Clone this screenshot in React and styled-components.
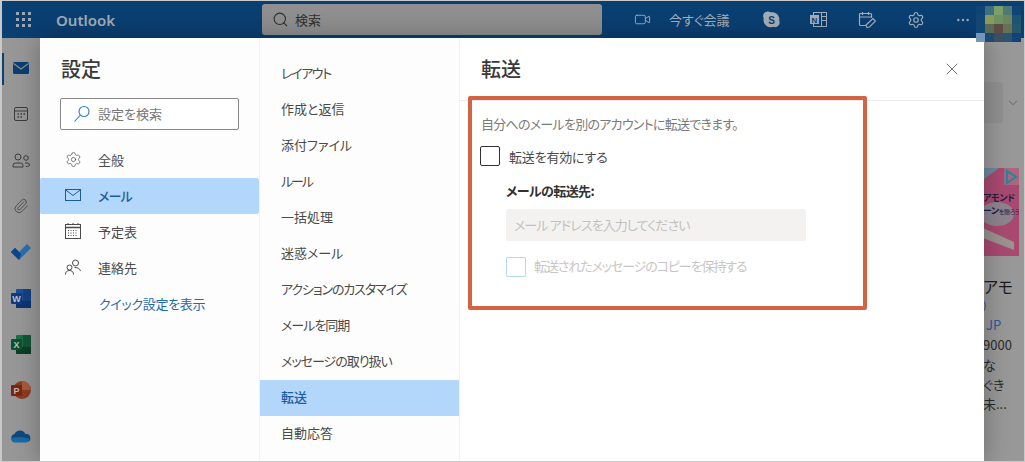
import styled, { createGlobalStyle } from 'styled-components';
import { Search, Video, Settings, X, Paperclip, ChevronDown, MoreHorizontal } from 'lucide-react';

const GlobalStyle = createGlobalStyle`
  html, body { margin: 0; padding: 0; }
  body {
    font-family: "Noto Sans CJK JP", "Noto Sans", sans-serif;
    font-feature-settings: "palt";
    font-size: 13px;
    color: #444;
    -webkit-font-smoothing: antialiased;
  }
  * { box-sizing: border-box; }
`;

const mailMenu = [
  { label: 'レイアウト', track: -1.4 },
  { label: '作成と返信', track: 0 },
  { label: '添付ファイル', track: 0 },
  { label: 'ルール', track: -2 },
  { label: '一括処理', track: 0 },
  { label: '迷惑メール', track: 0 },
  { label: 'アクションのカスタマイズ', track: -1.1 },
  { label: 'メールを同期', track: -1 },
  { label: 'メッセージの取り扱い', track: -1 },
  { label: '転送', track: 0 },
  { label: '自動応答', track: 0 },
];

const mosaic = [
  ['#0f4474', '#3f6f7c', '#7a9f6b', '#4f7a72', '#0f4474'],
  ['#124673', '#8a9a5a', '#6f9060', '#6a8560', '#1d5470'],
  ['#124673', '#5b6a58', '#5e4c42', '#677252', '#25566f'],
  ['#7496b8', '#1d4a6f', '#3b4e63', '#2a5570', '#0f4474'],
];

const Frame = styled.div`
  position: relative;
  width: 1025px;
  height: 462px;
  overflow: hidden;
  display: flex;
  flex-direction: column;
  background: #979797;
  border: 1px solid #c9c9c9;
  border-left-width: 2px;
`;

const Header = styled.header`
  height: 37px;
  flex: none;
  display: flex;
  align-items: center;
  background: #0a3f72;
  color: #a3aeb9;
`;

const Waffle = styled.div`
  width: 54px;
  padding-left: 14px;
  display: grid;
  grid-template-columns: repeat(3, 3px);
  gap: 3px;
  span { width: 3px; height: 3px; background: #9aa8b6; }
`;

const Brand = styled.div`
  width: 206px;
  font-family: "Noto Sans", sans-serif;
  font-size: 15px;
  font-weight: 600;
  color: #a2adb8;
`;

const SearchBar = styled.div`
  width: 340px;
  height: 31px;
  display: flex;
  align-items: center;
  gap: 6px;
  padding-left: 10px;
  background: #8f8f8f;
  border-radius: 3px;
  color: #2f2f2f;
`;

const HeaderTools = styled.div`
  display: flex;
  align-items: center;
  margin-left: 32px;
`;

const Tool = styled.div`
  width: ${p => p.$w}px;
  display: flex;
  align-items: center;
  color: #a3aeb9;
  font-size: 13px;
  white-space: nowrap;
`;

const Avatar = styled.div`
  position: absolute;
  left: 974px;
  top: 5px;
  display: grid;
  grid-template-columns: repeat(5, 9px);
  grid-auto-rows: 9px;
  z-index: 3;
`;

const Pixel = styled.i`
  background: ${p => p.$c};
`;

const Body = styled.div`
  flex: 1;
  display: flex;
  min-height: 0;
`;

const Rail = styled.nav`
  width: 38px;
  flex: none;
  padding-top: 7px;
  display: flex;
  flex-direction: column;
`;

const RailItem = styled.div`
  position: relative;
  height: 46px;
  display: flex;
  align-items: center;
  justify-content: center;
  color: #404040;
  ${p => p.$active && `
    &::before {
      content: '';
      position: absolute;
      left: 0;
      top: 8px;
      width: 2px;
      height: 32px;
      background: #0a3f72;
    }
  `}
`;

const Behind = styled.main`
  position: relative;
  flex: 1;
  display: flex;
  justify-content: flex-end;
  background: linear-gradient(90deg, #8a8a8a, #8c8c8c 93%, #989898 93%);
`;

const Strip = styled.aside`
  width: 41px;
  padding-top: 44px;
  display: flex;
  flex-direction: column;
  align-items: flex-start;
  color: #333;
`;

const StripTop = styled.div`
  width: 100%;
  height: 41px;
  display: flex;
  align-items: center;
  color: #2e4766;
  margin-bottom: 45px;
`;

const StripCard = styled.div`
  width: 20px;
  height: 41px;
  background: #909090;
  border-radius: 0 4px 4px 0;
  margin-right: 3px;
`;

const Ad = styled.div`
  position: relative;
  width: 36px;
  height: 88px;
  overflow: hidden;
  display: flex;
  flex-direction: column;
  padding-top: 23px;
  align-items: flex-start;
  background: #a84a70;
  color: #1e2148;
  font-size: 9px;
  font-weight: 700;
  line-height: 13px;
  white-space: nowrap;
`;

const AdArt = styled.svg`
  position: absolute;
  left: 0;
  top: 0;
`;

const AdText = styled.span`
  position: relative;
  letter-spacing: -0.3px;
  small { font-size: 6px; font-weight: 400; }
`;

const AdLines = styled.div`
  width: 100%;
  margin-top: 21px;
  display: flex;
  flex-direction: column;
`;

const AdLine = styled.div`
  height: ${p => p.$h}px;
  margin-bottom: ${p => p.$after || 0}px;
  padding-left: ${p => p.$inset || 0}px;
  white-space: nowrap;
  font-size: ${p => p.$size || 13}px;
  line-height: ${p => p.$h}px;
  color: ${p => p.$color || '#2c2c2c'};
`;

const Modal = styled.section`
  position: absolute;
  left: 0;
  top: 0;
  width: 944px;
  height: 424px;
  display: flex;
  background: #fff;
  box-shadow: 0 0 24px rgba(0, 0, 0, 0.3);
  z-index: 2;
`;

const SideColumn = styled.div`
  width: 220px;
  flex: none;
  padding-top: 16px;
  background: #fdfdfd;
  border-right: 1px solid #f3f2f1;
`;

const Title = styled.h1`
  margin: 0;
  font-size: 20px;
  font-weight: 500;
  line-height: 30px;
  color: #3b3a39;
`;

const SideTitle = styled(Title)`
  padding-left: 21px;
  margin-bottom: 14px;
`;

const SettingsSearch = styled.div`
  width: 179px;
  height: 32px;
  margin: 0 0 12px 20px;
  padding-left: 12px;
  display: flex;
  align-items: center;
  gap: 7px;
  border: 1px solid #8a8886;
  border-radius: 2px;
  background: #fff;
  color: #767676;
  span { margin-bottom: 2px; }
`;

const SideRow = styled.div`
  height: 36px;
  display: flex;
  align-items: center;
  gap: 16px;
  padding: 0 0 2px 24px;
  border-radius: 2px;
  color: ${p => (p.$active ? '#1c5c9c' : '#4a4a4a')};
  background: ${p => (p.$active ? '#b3d6fb' : 'transparent')};
  font-weight: ${p => (p.$active ? 500 : 400)};
  letter-spacing: ${p => p.$track || 0}px;
`;

const IconSlot = styled.span`
  width: 18px;
  height: 18px;
  flex: none;
  display: flex;
  align-items: center;
  justify-content: center;
`;

const QuickLink = styled.a`
  display: block;
  margin: 0 0 0 59px;
  line-height: 36px;
  letter-spacing: -0.33px;
  color: #1f6aa8;
`;

const MenuColumn = styled.div`
  width: 200px;
  flex: none;
  padding-top: 18px;
  background: #fdfdfd;
  border-right: 1px solid #f3f2f1;
`;

const MenuRow = styled.div`
  height: 36px;
  display: flex;
  align-items: center;
  padding: 0 0 4px 21px;
  letter-spacing: ${p => p.$track}px;
  color: ${p => (p.$active ? '#1c5c9c' : '#4a4a4a')};
  background: ${p => (p.$active ? '#b3d6fb' : 'transparent')};
  font-weight: ${p => (p.$active ? 500 : 400)};
`;

const Pane = styled.div`
  flex: 1;
  min-width: 0;
  display: flex;
  flex-direction: column;
`;

const PaneHeader = styled.div`
  height: 63px;
  flex: none;
  display: flex;
  align-items: center;
  justify-content: space-between;
  padding: 0 22px 0 21px;
  border-bottom: 1px solid #edebe9;
  color: #555;
`;

const PaneBody = styled.div`
  padding: 14px 20px;
`;

const Hint = styled.p`
  margin: -1px 0 12px 1px;
  line-height: 20px;
  letter-spacing: -0.74px;
  color: #7a7a7a;
`;

const CheckRow = styled.label`
  display: flex;
  align-items: center;
  gap: ${p => (p.$nested ? 8 : 9)}px;
  height: 20px;
  margin-left: ${p => (p.$nested ? 26 : 0)}px;
  letter-spacing: ${p => p.$track || 0}px;
  color: ${p => (p.$disabled ? '#c8c6c4' : '#4a4a4a')};
`;

const CheckText = styled.span`
  margin-bottom: ${p => p.$lift || 0}px;
`;

const Check = styled.span`
  width: 20px;
  height: 20px;
  flex: none;
  background: #fff;
  border: 1px solid ${p => (p.$disabled ? '#b3d6fb' : '#323130')};
  border-radius: 2px;
`;

const FieldLabel = styled.div`
  margin: 15px 0 8px 26px;
  line-height: 20px;
  font-weight: 700;
  letter-spacing: -0.6px;
  color: #323130;
`;

const Field = styled.div`
  width: 300px;
  height: 32px;
  margin: 0 0 16px 26px;
  padding: 0 0 2px 8px;
  display: flex;
  align-items: center;
  background: #f3f2f1;
  border-radius: 2px;
  letter-spacing: -0.9px;
  color: #c2c1bf;
`;

const Highlight = styled.div`
  position: absolute;
  left: 428px;
  top: 58px;
  width: 399px;
  height: 214px;
  border: 4px solid #d46344;
  border-radius: 2px;
  pointer-events: none;
`;

const MailGlyph = () => (
  <svg width="16" height="14" viewBox="0 0 16 14">
    <rect y="1" width="16" height="12" rx="1.5" fill="#0a3f72" />
    <path d="M0.5 2.5 8 8l7.5-5.5" fill="none" stroke="#8f8f8f" strokeWidth="1.2" />
  </svg>
);

const RailCalendar = () => (
  <svg width="16" height="16" viewBox="0 0 16 16" fill="none" stroke="#3c3c3c">
    <rect x="1.5" y="1.5" width="13" height="13" rx="1.5" />
    <path d="M1.5 5h13" />
    <path d="M4.500 8h1.500M7.500 8H9M10.500 8H12M4.500 11H6M7.500 11H9" strokeWidth="1.5" />
  </svg>
);

const RailPeople = () => (
  <svg width="18" height="15" viewBox="0 0 18 15" fill="none" stroke="#3c3c3c">
    <circle cx="6" cy="4" r="3" />
    <path d="M1 14v-1.500a2.500 2.500 0 0 1 2.500-2.500h5a2.500 2.500 0 0 1 2.500 2.500V14z" />
    <circle cx="14" cy="5" r="2.300" />
    <path d="M13 10h2.500a2 2 0 0 1 2 2c0 1-1 1.500-3.500 1.500" />
  </svg>
);

const TodoCheck = () => (
  <svg width="20" height="16" viewBox="0 0 20 16">
    <path d="M0 8l4-4 4 4-4 4z" fill="#0f4c94" />
    <path d="M4 12l4-4 8-8 4 4-12 12z" fill="#2a6fb0" />
    <path d="M4 4l6 6-2 6-4-4-4-4z" fill="#0d4690" />
  </svg>
);

const OfficeTile = ({ back, front, dark, letter }) => (
  <svg width="20" height="19" viewBox="0 0 20 19">
    <rect x="5" y="0" width="15" height="19" rx="1" fill={back} />
    <rect x="12" y="0" width="8" height="19" fill={dark} opacity="0.55" />
    <path d="M5 12h15v7H6a1 1 0 0 1-1-1z" fill={dark} />
    <rect x="0" y="4" width="11" height="11" rx="1" fill={front} />
    <text x="5.500" y="13" textAnchor="middle" fontSize="9" fontWeight="700" fill="#b8c4c4" fontFamily="Liberation Sans">{letter}</text>
  </svg>
);

const PowerTile = () => (
  <svg width="20" height="20" viewBox="0 0 20 20">
    <circle cx="11" cy="10" r="9" fill="#8c3d22" />
    <path d="M11 1a9 9 0 0 1 9 9h-9z" fill="#a65a3c" />
    <rect x="0" y="5" width="11" height="11" rx="1" fill="#7a2414" />
    <text x="5.500" y="14" textAnchor="middle" fontSize="9" fontWeight="700" fill="#c4b4ae" fontFamily="Liberation Sans">P</text>
  </svg>
);

const CloudTile = () => (
  <svg width="20" height="14" viewBox="0 0 20 14">
    <path d="M4 13a4 4 0 0 1-.5-7.900A6 6 0 0 1 14.500 5 4 4 0 0 1 16 13z" fill="#0e4a80" />
    <path d="M2 8.500 10 8l8 1.500a3.300 3.300 0 0 1-2.500 4H4A3.500 3.500 0 0 1 .3 9.500z" fill="#1a6aa6" />
  </svg>
);

const SkypeIcon = () => (
  <svg width="17" height="17" viewBox="0 0 17 17">
    <path d="M5 .5a4.500 4.500 0 0 1 2.600.8 7.300 7.300 0 0 1 8.600 8.500 4.500 4.500 0 0 1-5.800 6 7.300 7.300 0 0 1-9.700-8.600A4.500 4.500 0 0 1 5 .5z" fill="#a3aeb9" />
    <text x="8.500" y="12.500" textAnchor="middle" fontSize="10" fontWeight="700" fill="#0a3f72" fontFamily="Liberation Sans">S</text>
  </svg>
);

const NoteIcon = () => (
  <svg width="17" height="17" viewBox="0 0 17 17" fill="none" stroke="#a3aeb9">
    <rect x="3.500" y="1.500" width="13" height="14" />
    <path d="M11.500 1.500v14M11.500 5.500h5M11.500 9.500h5" />
    <rect x="0" y="4" width="9" height="9" fill="#a3aeb9" stroke="none" />
    <text x="4.500" y="11.500" textAnchor="middle" fontSize="8" fontWeight="700" fill="#0a3f72" stroke="none" fontFamily="Liberation Sans">N</text>
  </svg>
);

const CalendarCheck = () => (
  <svg width="18" height="18" viewBox="0 0 18 18" fill="none" stroke="#a3aeb9" strokeWidth="1.200">
    <path d="M8 14.500H2.500a1 1 0 0 1-1-1V3.500a1 1 0 0 1 1-1h10a1 1 0 0 1 1 1V7M1.500 6h12M4.500 1v3M10.500 1v3" />
    <path d="M8 14l1 2.500 2.500-.5 6-6-2.500-2.500z" />
  </svg>
);

const MirrorSearch = () => (
  <svg width="18" height="18" viewBox="0 0 18 18" fill="none" stroke="#2b7cd3" strokeWidth="1.100">
    <circle cx="11" cy="6.500" r="5" />
    <path d="M7.500 10 1.500 16.500" />
  </svg>
);

const EnvelopeOutline = () => (
  <svg width="16" height="12" viewBox="0 0 16 12" fill="none" stroke="#1c5c9c">
    <rect x=".5" y=".5" width="15" height="11" />
    <path d="M.5.800 8 6.500 15.500.800" />
  </svg>
);

const CalendarOutline = () => (
  <svg width="16" height="16" viewBox="0 0 16 16" fill="none" stroke="#4a4a4a">
    <rect x=".5" y="1.500" width="15" height="14" />
    <path d="M.5 4.500h15" strokeWidth="1.500" />
    <path d="M3 1.500V0M8 1.500V0M13 1.500V0" />
    <path d="M3 7.500h10M3 10h10M3 12.500h10" strokeDasharray="1 1.500" />
  </svg>
);

const ContactOutline = () => (
  <svg width="16" height="16" viewBox="0 0 16 16" fill="none" stroke="#4a4a4a">
    <circle cx="10.500" cy="4" r="3" />
    <circle cx="4.500" cy="8.500" r="2.500" />
    <path d="M.5 15.500c0-2.500 1.500-4 4-4s4 1.500 4 4" />
    <path d="M9.500 8.500c3 0 5.500 1 6 3.500" />
  </svg>
);

const AdPicture = () => (
  <AdArt width="36" height="88" viewBox="0 0 36 88">
    <path d="M0 0h16L0 12z" fill="#6f86a0" />
    <rect x="21" y="0" width="15" height="17" fill="#b0637f" />
    <path d="M24 3v12l9-6z" fill="none" stroke="#1a8a9a" strokeWidth="2" />
    <ellipse cx="14" cy="46" rx="17" ry="12" fill="#8d8490" />
    <path d="M0 60 31 74v8L0 70z" fill="#9a9390" />
  </AdArt>
);

export default function App() {
  return (
    <>
      <GlobalStyle />
      <Frame>
        <Header>
          <Waffle>
            {Array.from({ length: 9 }, (_, i) => <span key={i} />)}
          </Waffle>
          <Brand>Outlook</Brand>
          <SearchBar>
            <Search size={17} strokeWidth={1.5} />
            検索
          </SearchBar>
          <HeaderTools>
            <Tool $w={35}><Video size={17} strokeWidth={1.3} /></Tool>
            <Tool $w={94}>今すぐ会議</Tool>
            <Tool $w={47}><SkypeIcon /></Tool>
            <Tool $w={48}><NoteIcon /></Tool>
            <Tool $w={49}><CalendarCheck /></Tool>
            <Tool $w={48}><Settings size={18} strokeWidth={1.6} /></Tool>
            <Tool $w={20}><MoreHorizontal size={16} strokeWidth={1.6} /></Tool>
          </HeaderTools>
        </Header>
        <Avatar>
          {mosaic.flat().map((c, i) => <Pixel key={i} $c={c} />)}
        </Avatar>
        <Body>
          <Rail>
            <RailItem $active><MailGlyph /></RailItem>
            <RailItem><RailCalendar /></RailItem>
            <RailItem><RailPeople /></RailItem>
            <RailItem><Paperclip size={16} strokeWidth={1.2} /></RailItem>
            <RailItem><TodoCheck /></RailItem>
            <RailItem><OfficeTile back="#1c4f9c" front="#123a80" dark="#0e3470" letter="W" /></RailItem>
            <RailItem><OfficeTile back="#1a7048" front="#0e5030" dark="#0c3e28" letter="X" /></RailItem>
            <RailItem><PowerTile /></RailItem>
            <RailItem><CloudTile /></RailItem>
          </Rail>
          <Behind>
            <Strip>
              <StripTop>
                <StripCard />
                <ChevronDown size={14} strokeWidth={1} />
              </StripTop>
              <Ad>
                <AdPicture />
                <AdText>アモンド</AdText>
                <AdText>ーン<small>を贈ろう</small></AdText>
              </Ad>
              <AdLines>
                <AdLine $size={16} $h={18} $after={3} $color="#1c1c1c">アモ</AdLine>
                <AdLine $size={10} $h={14} $after={3} $color="#1c3f8a">)</AdLine>
                <AdLine $h={20} $inset={3} $color="#2e5a9a">JP</AdLine>
                <AdLine $h={20}>9000</AdLine>
                <AdLine $h={19.5}>な</AdLine>
                <AdLine $h={19.5}>ぐき</AdLine>
                <AdLine $h={19.5}>未...</AdLine>
              </AdLines>
            </Strip>
            <Modal>
              <SideColumn>
                <SideTitle>設定</SideTitle>
                <SettingsSearch><MirrorSearch /><span>設定を検索</span></SettingsSearch>
                <SideRow>
                  <IconSlot><Settings size={17} strokeWidth={1} /></IconSlot>全般
                </SideRow>
                <SideRow $active $track={-0.8}>
                  <IconSlot><EnvelopeOutline /></IconSlot>メール
                </SideRow>
                <SideRow>
                  <IconSlot><CalendarOutline /></IconSlot>予定表
                </SideRow>
                <SideRow>
                  <IconSlot><ContactOutline /></IconSlot>連絡先
                </SideRow>
                <QuickLink>クイック設定を表示</QuickLink>
              </SideColumn>
              <MenuColumn>
                {mailMenu.map(item => (
                  <MenuRow key={item.label} $track={item.track} $active={item.label === '転送'}>{item.label}</MenuRow>
                ))}
              </MenuColumn>
              <Pane>
                <PaneHeader>
                  <Title>転送</Title>
                  <X size={20} strokeWidth={1} />
                </PaneHeader>
                <PaneBody>
                  <Hint>自分へのメールを別のアカウントに転送できます。</Hint>
                  <CheckRow $track={-0.2}><Check />転送を有効にする</CheckRow>
                  <FieldLabel>メールの転送先:</FieldLabel>
                  <Field>メール アドレスを入力してください</Field>
                  <CheckRow $nested $disabled $track={-1.1}>
                    <Check $disabled />
                    <CheckText $lift={3}>転送されたメッセージのコピーを保持する</CheckText>
                  </CheckRow>
                </PaneBody>
              </Pane>
              <Highlight />
            </Modal>
          </Behind>
        </Body>
      </Frame>
    </>
  );
}
